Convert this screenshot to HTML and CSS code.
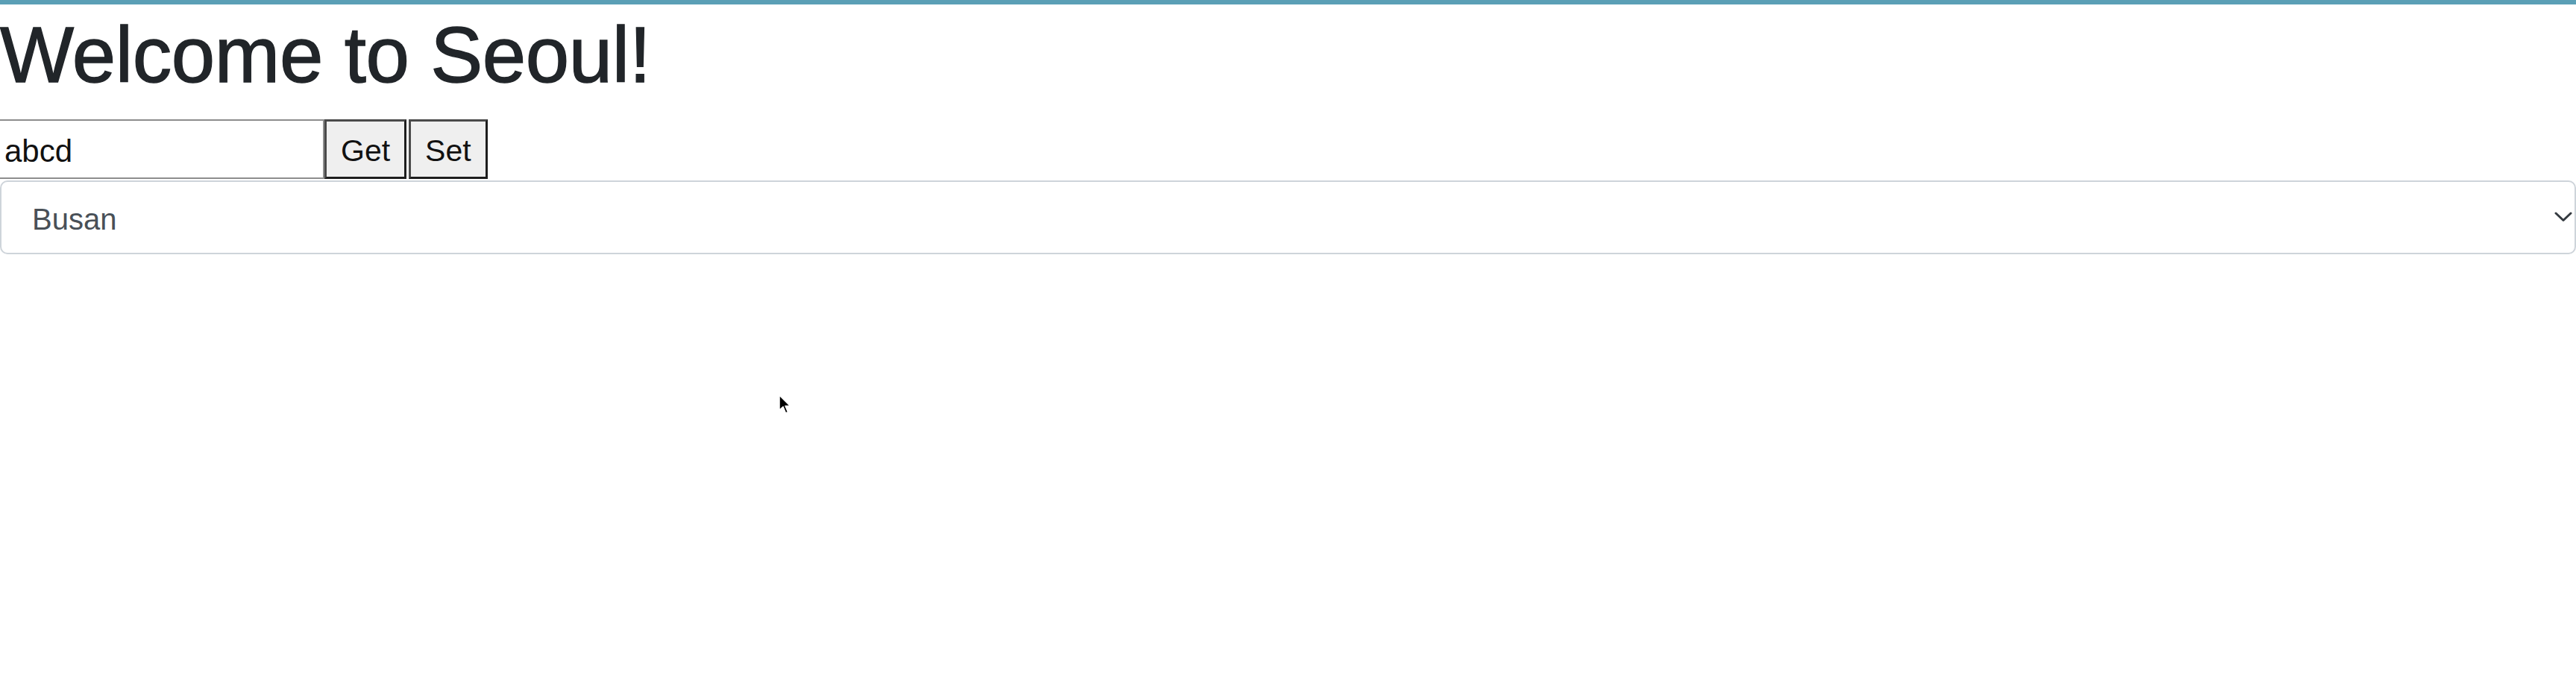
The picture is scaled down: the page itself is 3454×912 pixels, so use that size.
FILE: index.html
```html
<!DOCTYPE html>
<html lang="en">
<head>
<meta charset="utf-8">
<title>Welcome to Seoul!</title>
<link rel="stylesheet" href="styles.css">
</head>
<body>
<div class="topbar"></div>
<main class="page">
  <h1 class="title">Welcome to Seoul!</h1>
  <div class="kv-row">
    <input class="kv-input" type="text" value="abcd">
    <button class="kv-btn" type="button">Get</button>
    <button class="kv-btn" type="button">Set</button>
  </div>
  <div class="select-wrap">
    <select class="city-select">
      <option>Busan</option>
      <option>Seoul</option>
      <option>Incheon</option>
    </select>
    <svg class="chevron" width="24" height="14" viewBox="0 0 24 14" aria-hidden="true">
      <path d="M2 2 L12 11.5 L22 2" fill="none" stroke="#343a40" stroke-width="3" stroke-linecap="round" stroke-linejoin="round"/>
    </svg>
  </div>
</main>
<svg class="cursor" width="18" height="28" viewBox="0 0 18 28" aria-hidden="true">
  <path d="M1 1 L1 21 L6 16.5 L9.5 25 L12.5 23.8 L9 15.5 L15.5 15.5 Z" fill="#000" stroke="#fff" stroke-width="1.5" stroke-linejoin="round"/>
</svg>
</body>
</html>
```
FILE: styles.css
```css
html, body {
  margin: 0;
  padding: 0;
  background: #ffffff;
  overflow-x: hidden;
}

body {
  font-family: "Liberation Sans", Arial, Helvetica, sans-serif;
  color: #212529;
}

.topbar {
  height: 6px;
  background: #5b9fb6;
}

.page {
  display: flex;
  flex-direction: column;
}

.title {
  margin: 5px 0 0 0;
  font-size: 105px;
  line-height: 1.2;
  font-weight: 400;
  letter-spacing: -0.4px;
  color: #212529;
  -webkit-text-stroke: 1.4px #212529;
}

.kv-row {
  display: flex;
  align-items: stretch;
  margin-top: 23px;
  height: 80px;
}

.kv-input {
  box-sizing: border-box;
  width: 435px;
  height: 80px;
  margin: 0;
  padding: 5px 6px 0;
  border: 2px solid #8d8d8d;
  border-left: none;
  font-family: "Liberation Sans", Arial, sans-serif;
  font-size: 42px;
  color: #111;
  background: #fff;
  outline: none;
}

.kv-btn {
  box-sizing: border-box;
  height: 80px;
  margin: 0 3px 0 0;
  padding: 5px 19px 0;
  border: 3px solid;
  border-color: #4a4a4a #1e1e1e #1e1e1e #4a4a4a;
  background: #efefef;
  font-family: "Liberation Sans", Arial, sans-serif;
  font-size: 41px;
  color: #111;
}

.select-wrap {
  position: relative;
  margin-top: 2px;
}

.city-select {
  box-sizing: border-box;
  display: block;
  width: 100%;
  height: 99px;
  margin: 0;
  padding: 4px 70px 0 41px;
  border: 2.5px solid #ced4da;
  border-radius: 10px;
  background: #fff;
  font-family: "Liberation Sans", Arial, sans-serif;
  font-size: 40px;
  color: #495057;
  appearance: none;
  -webkit-appearance: none;
  outline: none;
}

.chevron {
  position: absolute;
  right: 5px;
  top: 42px;
  pointer-events: none;
}

.cursor {
  position: absolute;
  left: 1044px;
  top: 529px;
}
```
